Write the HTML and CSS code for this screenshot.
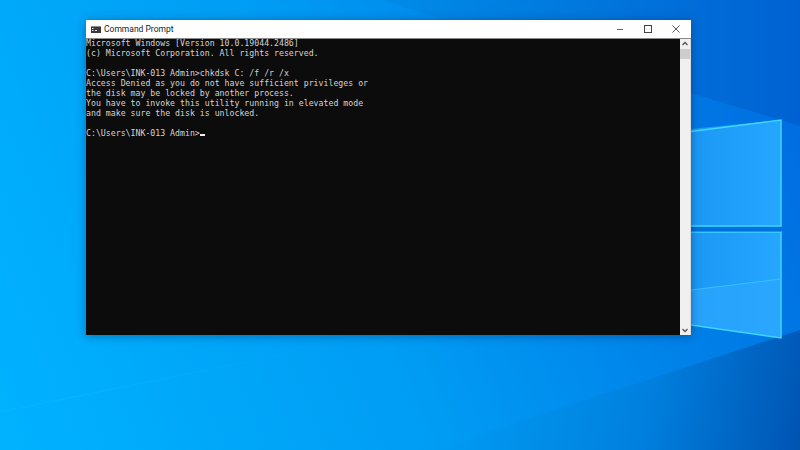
FILE: index.html
```html
<!DOCTYPE html>
<html lang="en">
<head>
<meta charset="utf-8">
<title>Command Prompt</title>
<link rel="stylesheet" href="styles.css">
</head>
<body>
<div class="desktop">
  <svg class="wallpaper" viewBox="0 0 800 450" width="800" height="450" aria-hidden="true">
    <defs>
      <linearGradient id="bg" gradientUnits="userSpaceOnUse" x1="0" y1="420" x2="800" y2="90">
        <stop offset="0" stop-color="#00b2ff"/>
        <stop offset="0.45" stop-color="#009df4"/>
        <stop offset="1" stop-color="#006ce0"/>
      </linearGradient>
      <linearGradient id="corner" gradientUnits="userSpaceOnUse" x1="460" y1="390" x2="800" y2="450">
        <stop offset="0" stop-color="#009af2"/>
        <stop offset="0.55" stop-color="#007fde"/>
        <stop offset="1" stop-color="#0054b2"/>
      </linearGradient>
      <linearGradient id="top" gradientUnits="userSpaceOnUse" x1="380" y1="0" x2="800" y2="0">
        <stop offset="0" stop-color="#008ce8"/>
        <stop offset="1" stop-color="#0062d2"/>
      </linearGradient>
      <linearGradient id="pane" x1="0" y1="0" x2="1" y2="0">
        <stop offset="0" stop-color="#1590ee"/>
        <stop offset="1" stop-color="#25a6ff"/>
      </linearGradient>
      <linearGradient id="streak" gradientUnits="userSpaceOnUse" x1="0" y1="0" x2="332" y2="0">
        <stop offset="0" stop-color="#22c4ff" stop-opacity="0.22"/>
        <stop offset="1" stop-color="#22c4ff" stop-opacity="0"/>
      </linearGradient>
    </defs>
    <rect width="800" height="450" fill="url(#bg)"/>
    <polygon points="380,0 800,0 800,126 781,120" fill="url(#top)"/>
    <polygon points="433,450 800,330 800,450" fill="url(#corner)"/>
    <line x1="0" y1="412" x2="332" y2="345" stroke="url(#streak)" stroke-width="1.500"/>
    <polygon points="640,134 781,120 781,226 640,226" fill="url(#pane)"/>
    <polygon points="640,232 781,232 781,338 640,316" fill="url(#pane)"/>
    <polygon points="691,290 781,278 781,338 691,325" fill="#2ea6ff" opacity="0.7"/>
    <polyline points="691,131.500 781,120 781,226 691,226" fill="none" stroke="#3fd6ff" stroke-width="1.500"/>
    <polyline points="691,232 781,232 781,338 691,325" fill="none" stroke="#3fd6ff" stroke-width="1.500"/>
    <line x1="691" y1="290" x2="781" y2="279" stroke="#35c0ff" stroke-width="1"/>
    <rect x="691" y="227" width="90" height="4.500" fill="#0070dc"/>
  </svg>

  <section class="window">
    <header class="titlebar">
      <svg class="app-icon" viewBox="0 0 10 7" width="10" height="7" aria-hidden="true">
        <rect width="10" height="7" fill="#3a3a3a"/>
        <rect x="0" y="0" width="10" height="1" fill="#8a8a8a"/>
        <path d="M1 2.500h1.500M1 4.500h1.500M4 4.500h2" stroke="#e6e6e6" stroke-width="1" fill="none"/>
      </svg>
      <span class="title">Command Prompt</span>
      <div class="controls">
        <svg class="control" viewBox="0 0 8 8" width="8" height="8" aria-hidden="true"><path d="M1 4.500h6" stroke="#666" stroke-width="1"/></svg>
        <svg class="control" viewBox="0 0 8 8" width="8" height="8" aria-hidden="true"><rect x="0.500" y="0.500" width="7" height="7" fill="none" stroke="#444" stroke-width="1"/></svg>
        <svg class="control" viewBox="0 0 8 8" width="8" height="8" aria-hidden="true"><path d="M0.500 0.500l7 7M7.500 0.500l-7 7" stroke="#444" stroke-width="0.900"/></svg>
      </div>
    </header>
    <div class="content">
      <div class="console">
        <pre class="console-text">Microsoft Windows [Version 10.0.19044.2486]
(c) Microsoft Corporation. All rights reserved.

C:\Users\INK-013 Admin&gt;chkdsk C: /f /r /x
Access Denied as you do not have sufficient privileges or
the disk may be locked by another process.
You have to invoke this utility running in elevated mode
and make sure the disk is unlocked.

C:\Users\INK-013 Admin&gt;<span class="cursor"></span></pre>
      </div>
      <aside class="scrollbar">
        <svg class="arrow" viewBox="0 0 10 10" width="10" height="10" aria-hidden="true"><path d="M2.500 6l2.500-2.500L7.500 6" fill="none" stroke="#555" stroke-width="1.300"/></svg>
        <div class="thumb"></div>
        <svg class="arrow arrow-down" viewBox="0 0 10 10" width="10" height="10" aria-hidden="true"><path d="M2.500 4l2.500 2.500L7.500 4" fill="none" stroke="#555" stroke-width="1.300"/></svg>
      </aside>
    </div>
  </section>
</div>
</body>
</html>
```
FILE: styles.css
```css
html, body {
  margin: 0;
  padding: 0;
}
.desktop {
  position: relative;
  width: 800px;
  height: 450px;
  overflow: hidden;
}
.wallpaper {
  position: absolute;
  left: 0;
  top: 0;
  display: block;
}
.window {
  position: absolute;
  left: 86px;
  top: 20px;
  width: 605px;
  height: 315px;
  display: flex;
  flex-direction: column;
  background: #fff;
  box-shadow: 0 1px 9px rgba(0, 40, 90, 0.45);
}
.titlebar {
  height: 18px;
  flex: none;
  display: flex;
  align-items: center;
  padding-left: 5px;
  gap: 3px;
  background: #fff;
  border-bottom: 1px solid #8a8a8a;
}
.app-icon {
  flex: none;
}
.title {
  font: 8.500px Roboto, "Liberation Sans", sans-serif;
  color: #222;
}
.controls {
  margin-left: auto;
  display: flex;
  gap: 20px;
  padding-right: 11px;
}
.control {
  display: block;
}
.content {
  flex: 1;
  display: flex;
  min-height: 0;
}
.console {
  flex: 1;
  background: #0c0c0c;
  overflow: hidden;
}
.console-text {
  margin: -1px 0 0;
  color: #d4d4d4;
  font: 8.220px/10px "DejaVu Sans Mono", monospace;
}
.cursor {
  display: inline-block;
  width: 5px;
  height: 2px;
  background: #f0f0f0;
}
.scrollbar {
  flex: none;
  width: 11px;
  display: flex;
  flex-direction: column;
  background: #f0f0f0;
  border-right: 1px solid #d8d8d8;
  box-sizing: border-box;
}
.arrow {
  display: block;
  flex: none;
}
.thumb {
  height: 10px;
  background: #cdcdcd;
}
.arrow-down {
  margin-top: auto;
}
```
